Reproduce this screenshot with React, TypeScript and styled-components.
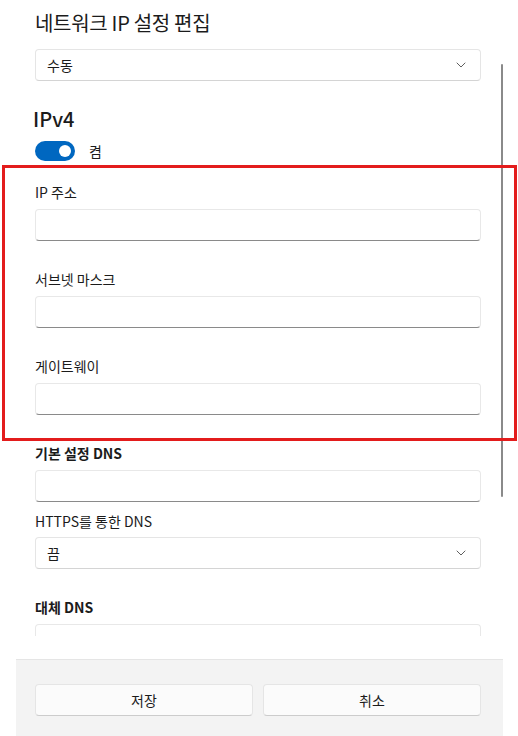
import styled, { createGlobalStyle } from 'styled-components';

const GlobalStyle = createGlobalStyle`
  html, body {
    margin: 0;
    padding: 0;
    background: #ffffff;
  }
  body {
    font-family: 'Noto Sans CJK KR', 'Noto Sans', sans-serif;
    color: #1b1b1b;
    -webkit-font-smoothing: antialiased;
  }
`;

const Page = styled.div`
  position: relative;
  width: 518px;
  height: 736px;
  overflow: hidden;
  background: #ffffff;
`;

const Dialog = styled.div`
  margin-left: 16px;
  width: 487px;
  height: 736px;
  display: flex;
  flex-direction: column;
`;

const Body = styled.div`
  position: relative;
  height: 659px;
  background: #ffffff;
`;

const Viewport = styled.div`
  height: 636px;
  overflow: hidden;
  padding: 9px 22px 0 19px;
  box-sizing: border-box;
`;

const Title = styled.h1`
  margin: 0 0 12px;
  font-size: 20px;
  line-height: 28px;
  font-weight: 400;
  letter-spacing: -0.3px;
`;

const Section = styled.h2`
  margin: 24px 0 8px;
  font-size: 20px;
  line-height: 28px;
  font-weight: 500;
  margin-left: -2px;
`;

const ToggleRow = styled.div`
  display: flex;
  align-items: center;
  gap: 14px;
  font-size: 14px;
  height: 20px;
  margin-bottom: 21px;
`;

const Track = styled.div`
  width: 40px;
  height: 20px;
  border-radius: 10px;
  background: #0067c0;
  display: flex;
  align-items: center;
  justify-content: flex-end;
  padding-right: 4px;
  box-sizing: border-box;
`;

const Knob = styled.div`
  width: 12px;
  height: 12px;
  border-radius: 50%;
  background: #ffffff;
`;

const Label = styled.div<{ $bold?: boolean; $gap?: number; $below?: number }>`
  font-size: 14px;
  line-height: 20px;
  font-weight: ${(p) => (p.$bold ? 700 : 400)};
  margin-top: ${(p) => p.$gap ?? 0}px;
  margin-bottom: ${(p) => p.$below ?? 7}px;
`;

const Field = styled.div`
  height: 32px;
  box-sizing: border-box;
  border: 1px solid #e8e8e8;
  border-bottom: 1px solid #8a8a8a;
  border-radius: 4px;
  background: #ffffff;
`;

const Select = styled.div`
  height: 32px;
  box-sizing: border-box;
  border: 1px solid #e5e5e5;
  border-bottom-color: #d4d4d4;
  border-radius: 4px;
  background: #ffffff;
  display: flex;
  align-items: center;
  justify-content: space-between;
  padding: 0 14px 0 11px;
  font-size: 14px;
`;

const ScrollThumb = styled.div`
  position: absolute;
  right: 0;
  top: 64px;
  width: 2px;
  height: 433px;
  background: #8a8a8a;
  border-radius: 1px;
`;

const Footer = styled.div`
  flex: 1;
  background: #f3f3f3;
  border-top: 1px solid #e5e5e5;
  display: grid;
  grid-template-columns: 1fr 1fr;
  gap: 10px;
  align-items: start;
  padding: 24px 22px 0 19px;
`;

const Button = styled.button`
  height: 32px;
  border: 1px solid #e5e5e5;
  border-bottom-color: #cccccc;
  border-radius: 4px;
  background: #fbfbfb;
  font-family: inherit;
  font-size: 14px;
  color: #1b1b1b;
  padding: 0;
`;

const Highlight = styled.div`
  position: absolute;
  left: 2px;
  top: 165px;
  width: 515px;
  height: 276px;
  box-sizing: border-box;
  border: 3px solid #e31c1c;
  pointer-events: none;
`;

function Chevron() {
  return (
    <svg width='10' height='6' viewBox='0 0 10 6' fill='none'>
      <path d='M1 1l4 4 4-4' stroke='#5f5f5f' strokeWidth='1' strokeLinecap='round' strokeLinejoin='round' />
    </svg>
  );
}

export default function App() {
  return (
    <Page>
      <GlobalStyle />
      <Dialog>
        <Body>
          <Viewport>
            <Title>네트워크 IP 설정 편집</Title>
            <Select>
              <span>수동</span>
              <Chevron />
            </Select>

            <Section>IPv4</Section>
            <ToggleRow>
              <Track>
                <Knob />
              </Track>
              <span>켬</span>
            </ToggleRow>

            <Label>IP 주소</Label>
            <Field />
            <Label $gap={28}>서브넷 마스크</Label>
            <Field />
            <Label $gap={28}>게이트웨이</Label>
            <Field />
            <Label $bold $gap={28}>기본 설정 DNS</Label>
            <Field />
            <Label $gap={9} $below={6}>HTTPS를 통한 DNS</Label>
            <Select>
              <span>끔</span>
              <Chevron />
            </Select>
            <Label $bold $gap={28}>대체 DNS</Label>
            <Field />
          </Viewport>
          <ScrollThumb />
        </Body>
        <Footer>
          <Button>저장</Button>
          <Button>취소</Button>
        </Footer>
      </Dialog>
      <Highlight />
    </Page>
  );
}
